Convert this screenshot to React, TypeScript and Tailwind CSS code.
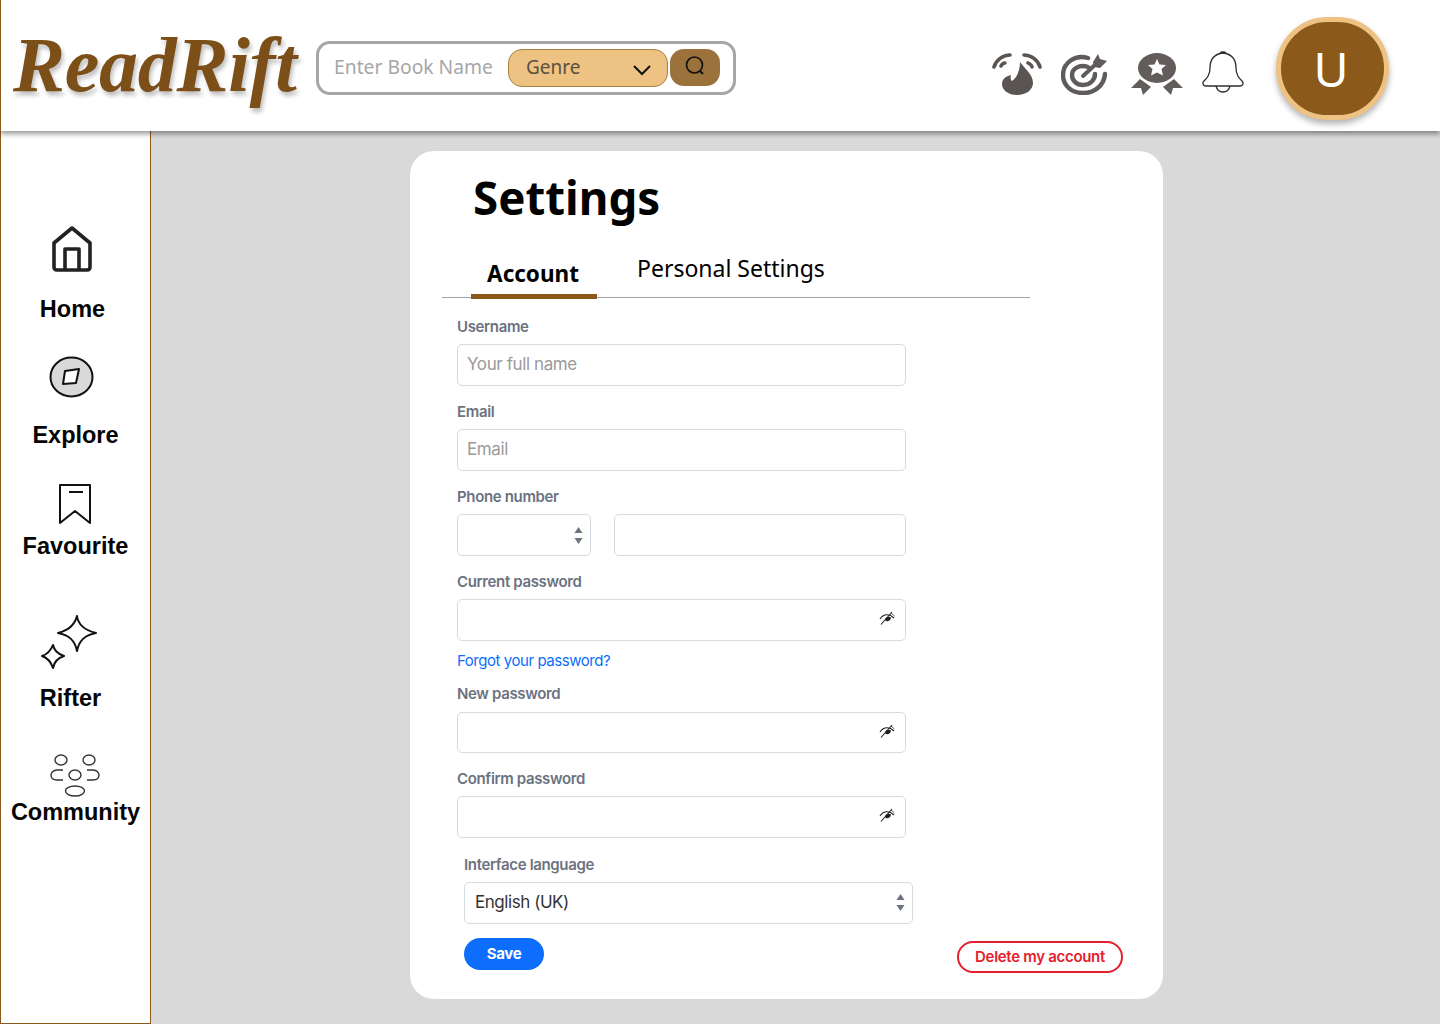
import React from "react";

const labelFont = "font-['Inter',sans-serif]";

const EyeOff = () => (
  <svg width="16" height="14" viewBox="0 0 16 14" className="text-[#222]">
    <path d="M1 8 C4 3 10 2 15 7" fill="none" stroke="currentColor" strokeWidth="1.1" />
    <path d="M6 9 C6 6 10 5 12 6.5 C12 9 9 11 7 10 Z" fill="currentColor" />
    <path d="M2 13.5 L13 1" stroke="currentColor" strokeWidth="1.1" />
    <path d="M12 2 L15.5 5" stroke="currentColor" strokeWidth="0.7" />
  </svg>
);

const Spinner = () => (
  <svg width="9" height="19" viewBox="0 0 9 19" className="text-[#6b7280]">
    <path d="M4.5 1 L8.5 7 H0.5 Z" fill="currentColor" />
    <path d="M0.5 12 H8.5 L4.5 18 Z" fill="currentColor" />
  </svg>
);

const Label = ({ children }: { children: React.ReactNode }) => (
  <label className={`block h-5 mb-[7px] text-[15px] leading-5 font-semibold tracking-[-0.35px] text-[#6b7280] ${labelFont}`}>
    {children}
  </label>
);

const inputCls = `block w-full h-full rounded-[5px] border border-[#d5dbe3] bg-white px-[9px] pb-[2px] text-[17px] tracking-[-0.4px] text-[#333] placeholder:text-[#9a9a9a] outline-none ${labelFont}`;

const PasswordInput = ({ height = "h-[42px]" }: { height?: string }) => (
  <div className={`relative ${height}`}>
    <input type="password" className={inputCls} />
    <span className="absolute right-[11px] top-[12px]">
      <EyeOff />
    </span>
  </div>
);

const NavItem = ({ icon, label, className }: { icon: React.ReactNode; label: string; className: string }) => (
  <div className={`flex flex-col ${className}`}>
    {icon}
    <span className="text-center text-[23.5px] leading-7 font-bold text-[#050505] font-['Liberation_Sans',sans-serif]">{label}</span>
  </div>
);

export default function App() {
  return (
    <div className="h-[1024px] w-[1440px] overflow-hidden bg-[#d9d9d9] flex flex-col">
      {/* top bar */}
      <header className="relative z-10 h-[131px] shrink-0 bg-white border-l border-[#8b5a1b] shadow-[0_3px_5px_rgba(0,0,0,0.4)] flex items-center">
        <div className="w-[301px] pl-[12px] -mt-[2px] shrink-0 overflow-visible whitespace-nowrap text-[78px] leading-none italic font-bold tracking-[-0.3px] text-[#7b4f17] font-['Liberation_Serif',serif] [text-shadow:2px_4px_4px_rgba(0,0,0,0.25)]">
          ReadRift
        </div>
        <div className="ml-[14px] mt-[4px] w-[420px] h-[54px] rounded-[14px] border-[3px] border-[#a6a6a6] flex items-center pl-[15px]">
          <input
            placeholder="Enter Book Name"
            className="w-[174px] shrink-0 text-[19.3px] text-[#333] placeholder:text-[#a6a6a6] outline-none font-['Noto_Sans',sans-serif]"
          />
          <div className="w-[160px] h-[38px] shrink-0 rounded-[14px] border border-[#a8803f] bg-[#edc283] flex items-center justify-between pl-[17px] pr-[15px] text-[19px] text-[#5b5040] font-['Noto_Sans',sans-serif]">
            Genre
            <svg width="20" height="12" viewBox="0 0 20 12" className="mt-[5px]">
              <path d="M2 2 L10 10 L18 2" fill="none" stroke="#111" strokeWidth="2" />
            </svg>
          </div>
          <button className="ml-[2px] w-[50px] h-[37px] rounded-[14px] bg-[#9c723c] flex items-center justify-center">
            <svg width="22" height="22" viewBox="0 0 22 22" className="-mt-[3px]">
              <circle cx="10.5" cy="10" r="8" fill="none" stroke="#111" strokeWidth="1.7" />
              <path d="M16 16 L19 19" stroke="#111" strokeWidth="2" />
            </svg>
          </button>
        </div>

        <div className="ml-[256px] flex items-center mt-[16px]">
          <svg width="50" height="44" viewBox="0 0 50 44" className="text-[#5a5553]">
            <path d="M28 10 C32 16 41 22 41 31 C41 38 34 43 25 43 C16 43 10 38 10 32 C10 27 14 24 19 23 C18 26 19 28 20 29 C25 26 28 18 28 10 Z" fill="currentColor" />
            <path d="M2 15 C4 8 11 3 18 3 M32 3 C39 3 46 8 48 15" fill="none" stroke="currentColor" strokeWidth="3.6" strokeLinecap="round" />
            <path d="M9 14 C10 12 12 11 13 11 M36 11 C38 12 40 13 40 15" fill="none" stroke="currentColor" strokeWidth="3.6" strokeLinecap="round" />
          </svg>
          <svg width="47" height="42" viewBox="0 0 47 42" className="ml-[19px] text-[#5f5b5a]">
            <path d="M27 5 C14 1 2 10 2 22 C2 33 11 40 22 40 C33 40 43 33 44 21" fill="none" stroke="currentColor" strokeWidth="4.4" strokeLinecap="round" />
            <path d="M27 14 C18 11 11 16 11 22 C11 28 16 32 22 32 C29 32 34 27 34 21" fill="none" stroke="currentColor" strokeWidth="4.4" strokeLinecap="round" />
            <path d="M22 23 L36 10" stroke="currentColor" strokeWidth="4" strokeLinecap="round" />
            <path d="M32 9 L37 1 L39 6 L46 8 L39 15 L33 14 Z" fill="currentColor" />
          </svg>
          <svg width="52" height="42" viewBox="0 0 52 42" className="ml-[23px] text-[#625d5b]">
            <ellipse cx="26" cy="15" rx="19" ry="15" fill="currentColor" />
            <path d="M26 6 L28.5 11.5 L35 12 L30.5 16 L32 22.5 L26 19.5 L20 22.5 L21.5 16 L17 12 L23.5 11.5 Z" fill="#fff" />
            <path d="M0 35 L9 26 L20 34 L12 42 L10 35 Z" fill="currentColor" />
            <path d="M52 35 L43 26 L32 34 L40 42 L42 35 Z" fill="currentColor" />
          </svg>
          <svg width="42" height="42" viewBox="0 0 42 42" className="ml-[19px] -mt-[4px]">
            <path
              d="M21 2 C12 3 8 9 8 17 C8 24 5 27 2 30 C0 32 1 35 4 35 L38 35 C41 35 42 32 40 30 C37 27 34 24 34 17 C34 9 30 3 21 2 Z M14 35 C15 39 18 41 21 41 C24 41 27 39 28 35 M18 2 C19 0.5 23 0.5 24 2"
              fill="none"
              stroke="#2b2f33"
              strokeWidth="1.3"
            />
          </svg>
          <div className="ml-[32px] -mt-[10px] w-[113px] h-[103px] rounded-full border-[5px] border-[#edc283] bg-[#8b5a1b] shadow-[0_4px_6px_rgba(0,0,0,0.3)] flex items-center justify-center pr-[3px] text-[48px] text-white font-['Noto_Sans',sans-serif]">
            U
          </div>
        </div>
      </header>

      <div className="flex flex-1 min-h-0">
        {/* side nav */}
        <aside className="w-[151px] shrink-0 bg-white border-x border-b border-[#8b5a1b] pt-[95px]">
          <NavItem
            className="items-center pr-[6px] gap-[22px]"
            label="Home"
            icon={
              <svg width="42" height="47" viewBox="0 0 42 47" fill="none" stroke="#222" strokeWidth="3.6" strokeLinejoin="round" className="-ml-[1px]">
                <path d="M21 2 L39 17 V41 C39 43 38 44 36 44 H6 C4 44 3 43 3 41 V17 Z" />
                <path d="M14 44 V23 H28 V44" />
              </svg>
            }
          />
          <NavItem
            className="items-center mt-[33px] gap-[23px]"
            label="Explore"
            icon={
              <svg width="45" height="42" viewBox="0 0 45 42" className="mr-[9px]">
                <ellipse cx="22.5" cy="21" rx="21" ry="19.5" fill="#d9d9d9" stroke="#111" strokeWidth="2" />
                <path d="M16 15 L30 13 L27 27 L14 28 Z" fill="#fff" stroke="#111" strokeWidth="2" strokeLinejoin="round" />
              </svg>
            }
          />
          <NavItem
            className="items-center mt-[34px] gap-[7px]"
            label="Favourite"
            icon={
              <svg width="34" height="42" viewBox="0 0 34 42" fill="none" stroke="#111" strokeWidth="2" strokeLinejoin="round" className="mr-[2px]">
                <path d="M2 2 H32 V40 L17 28 L2 40 Z" />
                <path d="M11 9 H25" />
              </svg>
            }
          />
          <NavItem
            className="items-center mt-[55px] pr-[10px] gap-[15px]"
            label="Rifter"
            icon={
              <svg width="58" height="54" viewBox="0 0 58 54" fill="none" stroke="#111" strokeWidth="2" strokeLinejoin="round" className="-ml-[4px]">
                <path d="M37 1 C38 9 44 15 56 18 C44 20 39 26 37 36 C35 26 30 20 18 18 C30 15 35 9 37 1 Z" />
                <path d="M13 30 C14 35 18 39 24 41 C18 43 14 47 13 53 C11 47 8 43 2 41 C8 39 11 35 13 30 Z" />
              </svg>
            }
          />
          <NavItem
            className="items-center mt-[41px] gap-[1px]"
            label="Community"
            icon={
              <svg width="50" height="44" viewBox="0 0 50 44" fill="none" stroke="#333" strokeWidth="1.4" className="mr-[2px]">
                <ellipse cx="11" cy="7" rx="6" ry="5" />
                <ellipse cx="39" cy="7" rx="6" ry="5" />
                <ellipse cx="25" cy="22" rx="6" ry="5" />
                <path d="M13 17 H7 C3 17 1 20 1 22 C1 25 3 27 7 27 H13" />
                <path d="M37 17 H43 C47 17 49 20 49 22 C49 25 47 27 43 27 H37" />
                <ellipse cx="25" cy="38" rx="9.5" ry="5" />
              </svg>
            }
          />
        </aside>

        {/* settings card */}
        <main className="flex-1 pl-[259px] pt-[20px]">
          <div className="w-[753px] h-[848px] rounded-[24px] bg-white pl-[47px] pr-[40px]">
            <h1 className="ml-[16px] pt-[15px] h-[82px] text-[45.7px] leading-[62px] font-bold text-black font-['Noto_Sans',sans-serif]">Settings</h1>

            <div className="-ml-[15px] w-[588px] h-[65px] border-b border-[#a3a3a3] flex items-end">
              <div className="ml-[29px] w-[126px] pr-[2px] h-[44px] -mb-[2px] border-b-[5px] border-[#8b5a1b] text-center text-[22.5px] leading-[32px] pt-[3px] font-bold text-black font-['Noto_Sans',sans-serif]">
                Account
              </div>
              <div className="ml-[40px] self-start pt-[19px] text-[23px] leading-[32px] text-black font-['Noto_Sans',sans-serif]">
                Personal Settings
              </div>
            </div>

            <div className="w-[449px] pt-[19px]">
              <Label>Username</Label>
              <div className="h-[42px] mb-[16px]">
                <input placeholder="Your full name" className={inputCls} />
              </div>

              <Label>Email</Label>
              <div className="h-[42px] mb-[16px]">
                <input placeholder="Email" className={inputCls} />
              </div>

              <Label>Phone number</Label>
              <div className="h-[42px] mb-[16px] flex gap-[23px]">
                <div className="relative w-[134px] h-full rounded-[5px] border border-[#d5dbe3] flex items-center justify-end pr-[7px]">
                  <Spinner />
                </div>
                <div className="flex-1 h-full">
                  <input className={inputCls} />
                </div>
              </div>

              <Label>Current password</Label>
              <PasswordInput />
              <a className={`block mt-[10px] h-5 mb-[13px] text-[15px] leading-5 tracking-[-0.45px] text-[#0d6efd] ${labelFont}`}>
                Forgot your password?
              </a>

              <div className="[&>label]:mb-[8px]">
                <Label>New password</Label>
              </div>
              <PasswordInput height="h-[41px]" />

              <div className="mt-[16px]">
                <Label>Confirm password</Label>
              </div>
              <PasswordInput />
            </div>

            <div className="ml-[7px] mt-[17px] w-[449px]">
              <Label>Interface language</Label>
              <div className={`h-[42px] rounded-[5px] border border-[#d5dbe3] flex items-center justify-between pl-[10px] pr-[7px] pb-[1px] text-[17px] tracking-[-0.45px] text-[#333] ${labelFont}`}>
                English (UK)
                <Spinner />
              </div>
            </div>

            <div className="ml-[7px] mt-[14px] flex justify-between items-start">
              <button className={`w-[80px] h-[32px] rounded-full bg-[#0d6efd] text-white text-[15px] font-bold tracking-[-0.4px] ${labelFont}`}>Save</button>
              <button className={`mt-[3px] w-[166px] h-[32px] rounded-full border-2 border-[#e41e2d] bg-white text-[#e41e2d] text-[15px] font-semibold tracking-[-0.3px] ${labelFont}`}>
                Delete my account
              </button>
            </div>
          </div>
        </main>
      </div>
    </div>
  );
}
